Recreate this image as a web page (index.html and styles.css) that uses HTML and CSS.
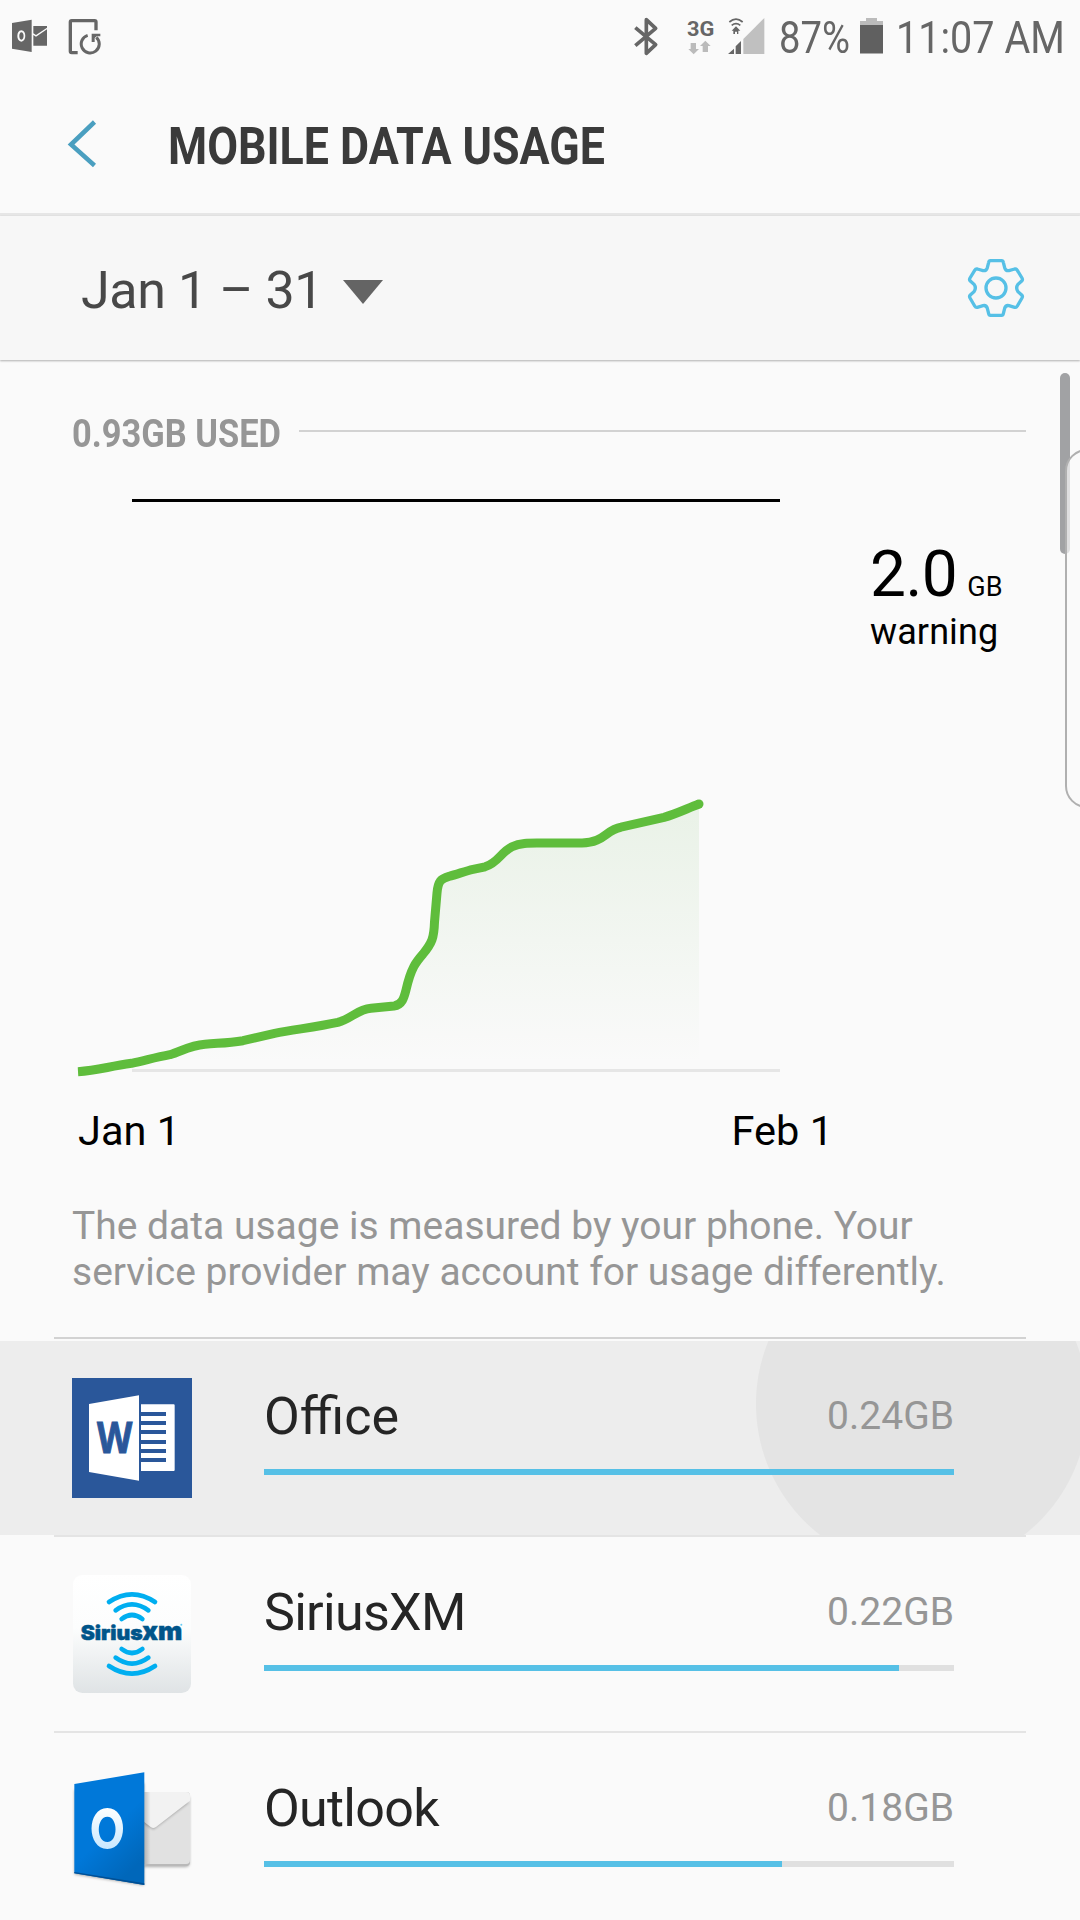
FILE: index.html
```html
<!DOCTYPE html>
<html lang="en">
  <head>
    <meta charset="UTF-8" />
    <meta name="viewport" content="width=device-width, initial-scale=1.0" />
    <title>Mobile data usage</title>
    <link rel="stylesheet" href="styles.css">
  </head>
  <body>
    <div class="status_bar">
      <div class="status_left">
        <svg class="ico_mail" width="36" height="34" viewBox="36 58 108 102">
          <path fill="#666" fill-rule="evenodd" d="M36 70L95 60V157L36 147ZM64 92C48 92 48 126 64 126C80 126 80 92 64 92ZM64 98C73 98 73 120 64 120C56 120 56 98 64 98Z"/>
          <path fill="#666" d="M100 79H141V84L108 106L100 101ZM100 106L108 111L141 89V138H100Z"/>
        </svg>
        <svg class="ico_update" width="33" height="37" viewBox="205 52 99 111">
          <path fill="none" stroke="#666" stroke-width="10" d="M234 156H216Q212 156 212 152V64Q212 60 216 60H285Q289 60 289 64V89"/>
          <path fill="none" stroke="#666" stroke-width="9" d="M264 104A27 27 0 1 0 290 110"/>
          <path fill="#666" d="M276 99H302V107H291L285 112V124H276Z"/>
        </svg>
      </div>
      <div class="status_right">
        <svg class="ico_bt" width="25" height="39" viewBox="74 49 75 117">
          <path fill="none" stroke="#666" stroke-width="11" stroke-linejoin="round" d="M78 81L139 132L111 158V57L139 83L78 135"/>
        </svg>
        <svg class="ico_3g" width="28" height="38" viewBox="231 51 84 114">
          <text x="231" y="107" textLength="82" lengthAdjust="spacingAndGlyphs" class="net_text">3G</text>
          <path fill="#bbb" d="M242 129H258V147H267L251 163L235 147H242ZM278 156H294V138H302L286 122L270 138H278Z"/>
        </svg>
        <svg class="ico_signal" width="37" height="38" viewBox="353 51 111 114">
          <path fill="#c0c0c0" d="M462 54V162H399V117Z"/>
          <path fill="#666" d="M353 162L371 146V162ZM376 162V139L392 123V162ZM377 79L390 92H384V102H380V95H374V102H369V92H364Z"/>
          <path fill="none" stroke="#666" stroke-width="5" d="M357 66Q377 49 397 66M364 76Q377 66 390 76"/>
        </svg>
        <span class="status_text battery_text">87%</span>
        <svg class="ico_battery" width="23" height="37" viewBox="0 0 23 37">
          <path fill="#bbb" d="M6 1H17V4H23V8H0V4H6Z"/>
          <path fill="#606060" d="M0 8H23V36.5H0Z"/>
        </svg>
        <span class="status_text clock">11:07 AM</span>
      </div>
    </div>

    <div class="header">
      <svg class="back" width="30" height="50" viewBox="0 0 30 50">
        <path fill="none" stroke="#4a9fc0" stroke-width="4.5" d="M27.5 3L4 25.5L27.5 46.5"/>
      </svg>
      <h1>MOBILE DATA USAGE</h1>
    </div>

    <div class="filter">
      <span class="period">Jan 1 – 31</span>
      <div class="arrow_down"></div>
      <svg class="gear" width="58" height="60" viewBox="321 114 174 180">
        <g fill="none" stroke="#56c0e6" stroke-width="10">
          <path d="M391 122H425Q429 122 430 127L434 143Q437 153 447 152L464 147Q469 146 472 151L486 174Q489 179 485 183L474 193Q466 204 474 215L485 225Q489 229 486 234L472 258Q469 263 464 262L447 257Q437 255 434 265L430 281Q429 286 425 286H391Q387 286 386 281L382 265Q379 255 369 257L352 262Q347 263 344 258L330 234Q327 229 331 225L342 215Q350 204 342 193L331 183Q327 179 330 174L344 151Q347 146 352 147L369 152Q379 153 382 143L386 127Q387 122 391 122Z"/>
          <circle cx="408" cy="204" r="30"/>
        </g>
      </svg>
    </div>

    <div class="content">
      <div class="section_title">
        <span class="used">0.93GB USED</span>
        <div class="rule"></div>
      </div>

      <div class="usage">
        <svg class="chart" width="720" height="600" viewBox="72 490 720 600">
          <defs>
            <linearGradient id="area" x1="0" y1="804" x2="0" y2="1064" gradientUnits="userSpaceOnUse">
              <stop offset="0" stop-color="#52a83c" stop-opacity=".1"/>
              <stop offset="1" stop-color="#52a83c" stop-opacity="0"/>
            </linearGradient>
          </defs>
          <path fill="#000" d="M132 499H780V502H132Z"/>
          <path fill="#e6e6e6" d="M132 1069H780V1072H132Z"/>
          <path fill="url(#area)" d="M78 1071.7C98 1070.5 108 1066.5 131.5 1063.3C145 1060.5 155 1057.5 170 1054.7C182 1051 190 1045.5 205 1044.3C220 1043 228 1043 243 1040.7L274.6 1033.3C295 1029.5 318 1026.5 337.8 1022.3C352 1018.5 357 1009.5 371 1008.3L394 1006C402 1005 404 998 406 990C411 968 416 962 423 954C432 943 434 938 434.5 922L437 893C438 881 441 878.5 449 876.3C457 874.5 465 871 473 869.3L485 866.8C498 863 501 852 512 846.7C521 842.5 530 843 542 843H582C604 843 606 829.5 621 827.2L664 817.3C676 814 687 808.5 699 804V1070H78Z"/>
          <path class="usage_line" d="M78 1071.7C98 1070.5 108 1066.5 131.5 1063.3C145 1060.5 155 1057.5 170 1054.7C182 1051 190 1045.5 205 1044.3C220 1043 228 1043 243 1040.7L274.6 1033.3C295 1029.5 318 1026.5 337.8 1022.3C352 1018.5 357 1009.5 371 1008.3L394 1006C402 1005 404 998 406 990C411 968 416 962 423 954C432 943 434 938 434.5 922L437 893C438 881 441 878.5 449 876.3C457 874.5 465 871 473 869.3L485 866.8C498 863 501 852 512 846.7C521 842.5 530 843 542 843H582C604 843 606 829.5 621 827.2L664 817.3C676 814 687 808.5 699 804"/>
          <circle cx="699" cy="804" r="4.5" fill="#5fbd3c"/>
        </svg>
        <div class="limit">
          <p><span class="limit_num">2.0</span><span class="limit_unit">GB</span></p>
          <p class="limit_label">warning</p>
        </div>
      </div>

      <div class="dates">
        <span>Jan 1</span>
        <span>Feb 1</span>
      </div>

      <p class="note">The data usage is measured by your phone. Your<br>service provider may account for usage differently.</p>
    </div>

    <div class="app_list">
      <div class="app pressed">
        <svg class="app_icon" width="120" height="120" viewBox="216 144 360 360">
          <path fill="#2a579a" d="M216 144H576V504H216Z"/>
          <path fill="#fff" d="M267 222L417 196V452L267 426ZM423 223H521Q524 223 524 226V420Q524 423 521 423H423Z"/>
          <path fill="#2a579a" d="M423 246H498V258H423ZM423 273H498V285H423ZM423 300H498V312H423ZM423 330H498V342H423ZM423 357H498V369H423ZM423 384H498V396H423Z"/>
          <text class="word_letter" x="291" y="368" textLength="106" lengthAdjust="spacingAndGlyphs">W</text>
        </svg>
        <div class="app_info">
          <div class="app_row"><span class="app_name">Office</span><span class="app_size">0.24GB</span></div>
          <div class="bar"><div class="bar_fill" style="width: 100%"></div></div>
        </div>
      </div>

      <div class="app">
        <svg class="app_icon" width="120" height="120" viewBox="96 72 360 360">
          <defs>
            <linearGradient id="tile" x1="0" y1="0" x2="0" y2="1">
              <stop offset="0" stop-color="#fff"/>
              <stop offset=".45" stop-color="#fcfdfd"/>
              <stop offset="1" stop-color="#dfe3e5"/>
            </linearGradient>
          </defs>
          <rect x="99" y="75" width="354" height="354" rx="28" fill="url(#tile)"/>
          <g fill="none" stroke="#00aef0" stroke-width="14" stroke-linecap="round">
            <path d="M207 156Q276 110 345 156M227 181Q276 145 325 181M245 207Q276 183 307 207"/>
            <path d="M207 348Q276 394 345 348M227 323Q276 359 325 323M245 297Q276 321 307 297"/>
          </g>
          <text class="sirius_text" x="122" y="271" textLength="186" lengthAdjust="spacingAndGlyphs">Sirius</text>
          <text class="sirius_text sirius_xm" x="307" y="271" textLength="120" lengthAdjust="spacingAndGlyphs">xm</text>
          <circle cx="424" cy="224" r="3" fill="#00aef0" opacity=".6"/>
        </svg>
        <div class="app_info">
          <div class="app_row"><span class="app_name tight">SiriusXM</span><span class="app_size">0.22GB</span></div>
          <div class="bar"><div class="bar_fill" style="width: 92%"></div></div>
        </div>
      </div>

      <div class="app">
        <svg class="app_icon" width="120" height="120" viewBox="96 120 360 360">
          <defs>
            <linearGradient id="blue" x1="0" y1="0" x2=".6" y2="1">
              <stop offset=".6" stop-color="#0078d9"/>
              <stop offset="1" stop-color="#0067ba"/>
            </linearGradient>
            <linearGradient id="ring" x1="0" y1="0" x2="0" y2="1">
              <stop offset="0" stop-color="#fff"/>
              <stop offset="1" stop-color="#c8e8ff"/>
            </linearGradient>
            <linearGradient id="side" x1="0" y1="0" x2="1" y2="0">
              <stop offset="0" stop-color="#000" stop-opacity=".22"/>
              <stop offset="1" stop-color="#000" stop-opacity="0"/>
            </linearGradient>
            <filter id="soft" x="-20%" y="-20%" width="140%" height="140%">
              <feGaussianBlur stdDeviation="4"/>
            </filter>
          </defs>
          <path fill="#000" opacity=".35" filter="url(#soft)" d="M300 200H448V400Q448 410 438 410H300ZM104 180L312 160V466L104 433Z"/>
          <rect x="290" y="186" width="160" height="222" rx="12" fill="#b9b9b9"/>
          <rect x="290" y="186" width="160" height="216" rx="12" fill="#e1e1e1"/>
          <path fill="#000" opacity=".3" filter="url(#soft)" d="M312 280L340 298L448 216L420 210L312 250Z"/>
          <path fill="#f2f2f2" d="M300 186H438Q450 186 450 198V212L348 291Q340 297 332 291L300 266Z"/>
          <path fill="url(#side)" d="M312 186H332V402H312Z"/>
          <path fill="url(#blue)" d="M103 162L313 127V465L103 430Z"/>
          <path fill="#004f94" d="M103 426L313 460V465L103 430Z"/>
          <path fill="url(#ring)" fill-rule="evenodd" d="M202 234C139 234 139 357 202 357C265 357 265 234 202 234ZM202 260C235 260 235 336 202 336C168 336 168 260 202 260Z"/>
        </svg>
        <div class="app_info">
          <div class="app_row"><span class="app_name tight">Outlook</span><span class="app_size">0.18GB</span></div>
          <div class="bar"><div class="bar_fill" style="width: 75.1%"></div></div>
        </div>
      </div>
    </div>

    <div class="scrollbar"></div>
    <div class="edge_panel"></div>
  </body>
</html>
```

FILE: styles.css
```css
* {
  margin: 0;
  padding: 0;
  box-sizing: border-box;
}

body {
  height: 1920px;
  overflow: hidden;
  position: relative;
  background: #fafafa;
  font-family: Roboto, "Liberation Sans", sans-serif;
  color: #000;
}

svg {
  display: block;
  flex: none;
}

/* status bar */
.status_bar {
  height: 75px;
  padding: 17px 16px 0 12px;
  display: flex;
  justify-content: space-between;
}

.status_left,
.status_right {
  display: flex;
  align-items: flex-start;
}

.ico_mail {
  margin: 2px 20px 0 0;
}

.ico_update {
  margin-top: 1px;
}

.ico_bt {
  margin-right: 28px;
}

.ico_3g {
  margin-right: 13px;
}

.net_text {
  font-size: 62px;
  font-weight: 700;
  fill: #666;
}

.status_text {
  font-size: 45px;
  line-height: 42px;
  color: #666;
  white-space: nowrap;
  transform-origin: left;
}

.battery_text {
  width: 73px;
  margin: 0 8px 0 14px;
  transform: scaleX(.85);
}

.clock {
  width: 168px;
  margin-left: 13px;
  transform: scaleX(.88);
}

/* title */
.header {
  height: 141px;
  padding: 44px 0 0 67px;
  display: flex;
  border-bottom: 3px solid #e6e6e6;
}

.header h1 {
  margin: -2px 0 0 71px;
  font-size: 52px;
  line-height: 60px;
  font-weight: 700;
  color: #3a3a3a;
  white-space: nowrap;
  transform: scaleX(.86);
  transform-origin: left;
}

.filter {
  height: 144px;
  padding: 0 55px 0 81px;
  display: flex;
  align-items: center;
  background: #f7f7f7;
  box-shadow: 0 1px 2px rgba(0, 0, 0, .3);
}

.period {
  width: 262px;
  padding-top: 4px;
  font-size: 52px;
  letter-spacing: -.4px;
  color: #484848;
  white-space: nowrap;
}

.arrow_down {
  border: 20px solid transparent;
  border-top: 24px solid #646464;
  border-bottom: 0;
  margin-top: 8px;
}

.gear {
  margin-left: auto;
}

/* chart */
.content {
  height: 977px;
  padding: 46px 54px 0 72px;
}

.section_title {
  height: 56px;
  display: flex;
}

.used {
  width: 227px;
  font-size: 39.5px;
  line-height: 56px;
  font-weight: 700;
  color: #969696;
  white-space: nowrap;
  transform: scaleX(.872);
  transform-origin: left;
}

.rule {
  flex: 1;
  height: 2px;
  margin-top: 24px;
  background: #d2d2d2;
}

.usage {
  height: 600px;
  margin-top: 28px;
  display: flex;
}

.usage_line {
  fill: none;
  stroke: #5fbd3c;
  stroke-width: 9;
}

.limit {
  padding: 47px 0 0 78px;
  white-space: nowrap;
}

.limit_num {
  font-size: 64px;
  line-height: 75px;
  letter-spacing: -.5px;
}

.limit_unit {
  margin-left: 10px;
  font-size: 27px;
}

.limit_label {
  margin-top: -1px;
  font-size: 36px;
  line-height: 42px;
  letter-spacing: .1px;
}

.dates {
  width: 755px;
  margin: 17px 0 0 6px;
  display: flex;
  justify-content: space-between;
  font-size: 41.5px;
  line-height: 47px;
}

.note {
  margin-top: 49px;
  font-size: 39px;
  line-height: 46px;
  color: #969696;
  white-space: nowrap;
}

/* apps */
.app_list {
  padding-top: 4px;
  background: linear-gradient(#d2d2d2, #d2d2d2) 54px 0 / 972px 2px no-repeat;
}

.app {
  height: 196px;
  padding: 37px 126px 0 72px;
  display: flex;
  background: linear-gradient(#e4e4e4, #e4e4e4) 54px 194px / 972px 2px no-repeat;
}

.pressed {
  background:
    linear-gradient(#e4e4e4, #e4e4e4) 54px 194px / 972px 2px no-repeat,
    linear-gradient(#fafafa, #fafafa) 0 194px / 100% 2px no-repeat,
    radial-gradient(circle at 922px 63px, #e4e4e4 165.5px, #ededed 166.5px);
}

.app_info {
  flex: 1;
  margin-left: 72px;
}

.app_row {
  height: 91px;
  display: flex;
  justify-content: space-between;
}

.app_name {
  font-size: 52px;
  line-height: 78px;
  color: #252525;
}

.tight {
  letter-spacing: -.7px;
}

.app_size {
  font-size: 39px;
  line-height: 77px;
  color: #969696;
}

.bar {
  height: 6px;
  background: #e0e0e0;
}

.bar_fill {
  height: 6px;
  background: #56c0e6;
}

.word_letter {
  font-family: "Open Sans", sans-serif;
  font-size: 130px;
  font-weight: 700;
  fill: #2a579a;
  stroke: #2a579a;
  stroke-width: 3px;
}

.sirius_text {
  font-family: Inter, sans-serif;
  font-size: 60px;
  font-weight: 900;
  fill: #00558a;
  stroke: #00558a;
  stroke-width: 1.5px;
}

.sirius_xm {
  font-size: 76px;
}

/* overlays at the right edge */
.scrollbar {
  position: absolute;
  left: 1060px;
  top: 373px;
  width: 10px;
  height: 181px;
  border-radius: 5px;
  background: #a1a2a4;
}

.edge_panel {
  position: absolute;
  left: 1065px;
  top: 449px;
  width: 60px;
  height: 359px;
  border: 2px solid #b0b0b0;
  border-radius: 22px;
  background: rgba(250, 250, 250, .7);
}
```
